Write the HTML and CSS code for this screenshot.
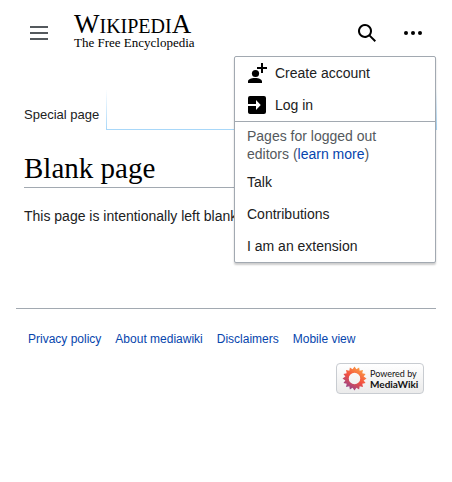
FILE: index.html
```html
<!DOCTYPE html>
<html lang="en">
<head>
<meta charset="utf-8">
<meta name="viewport" content="width=device-width, initial-scale=1">
<title>Blank page</title>
<link rel="stylesheet" href="styles.css">
</head>
<body>
<header class="header">
  <button class="icon-button" type="button" aria-label="Main menu">
    <svg class="icon icon-muted" viewBox="0 0 20 20"><path d="M1 3h18v2H1zm0 6h18v2H1zm0 6h18v2H1z"/></svg>
  </button>
  <a class="logo" href="#">
    <span class="wordmark"><span class="cap">W</span>IKIPEDI<span class="cap">A</span></span>
    <span class="tagline">The Free Encyclopedia</span>
  </a>
  <button class="icon-button search" type="button" aria-label="Search">
    <svg class="icon" viewBox="0 0 20 20"><path fill-rule="evenodd" d="M12.2 13.6a7 7 0 1 1 1.4-1.4l5.4 5.4-1.4 1.4zM13 8A5 5 0 1 0 3 8a5 5 0 0 0 10 0z"/></svg>
  </button>
  <button class="icon-button" type="button" aria-label="Personal tools" aria-expanded="true">
    <svg class="icon" viewBox="0 0 20 20"><circle cx="3" cy="10" r="2"/><circle cx="10" cy="10" r="2"/><circle cx="17" cy="10" r="2"/></svg>
  </button>
  <nav class="menu" aria-label="Personal tools">
    <ul class="menu-list">
      <li><a class="menu-item" href="#"><svg class="icon" viewBox="0 0 20 20"><path d="M14 0h2v4h4v2h-4v4h-2V6h-4V4h4zM1 20v-1.500C1 16.500 4 15 8 15s7 1.500 7 3.500V20z"/><circle cx="8.500" cy="10.500" r="3.600"/></svg>Create account</a></li>
      <li><a class="menu-item" href="#"><svg class="icon" viewBox="0 0 20 20"><path d="M1 11v6c0 1.100.9 2 2 2h14a2 2 0 0 0 2-2V3a2 2 0 0 0-2-2H3a2 2 0 0 0-2 2v6h8V5l4.750 5L9 15v-4z"/></svg>Log in</a></li>
    </ul>
    <p class="menu-heading">Pages for logged out editors (<a href="#">learn more</a>)</p>
    <ul class="menu-list">
      <li><a class="menu-item" href="#">Talk</a></li>
      <li><a class="menu-item" href="#">Contributions</a></li>
      <li><a class="menu-item" href="#">I am an extension</a></li>
    </ul>
  </nav>
</header>
<nav class="tabs" aria-label="Namespaces">
  <a class="tab" href="#">Special page</a>
  <span class="tabs-rest"></span>
</nav>
<main class="content">
  <h1>Blank page</h1>
  <p>This page is intentionally left blank.</p>
</main>
<footer class="footer">
  <ul class="footer-links">
    <li><a href="#">Privacy policy</a></li>
    <li><a href="#">About mediawiki</a></li>
    <li><a href="#">Disclaimers</a></li>
    <li><a href="#">Mobile view</a></li>
  </ul>
  <a class="badge" href="#">
    <svg class="flower" viewBox="-13 -13 26 26" aria-hidden="true">
      <defs>
        <linearGradient id="petals" gradientUnits="userSpaceOnUse" x1="7" y1="-11" x2="-7" y2="11">
          <stop offset="0" stop-color="#fba245"/><stop offset=".5" stop-color="#f4503f"/><stop offset="1" stop-color="#8f4190"/>
        </linearGradient>
      </defs>
      <path fill="url(#petals)" fill-rule="evenodd" d="M0-12.500 2-9.500 4.800-11.500 5.400-8.100 8.800-8.800 8.100-5.400 11.500-4.800 9.500-2 12.500 0 9.500 2 11.500 4.800 8.100 5.400 8.800 8.800 5.400 8.100 4.800 11.500 2 9.500 0 12.500-2 9.500-4.800 11.500-5.400 8.100-8.800 8.800-8.100 5.400-11.500 4.800-9.500 2-12.500 0-9.500-2-11.500-4.800-8.100-5.400-8.800-8.800-5.400-8.100-4.800-11.500-2-9.500zM6 0A6 6 0 1 0-6 0 6 6 0 1 0 6 0z"/>
    </svg>
    <span class="badge-text">Powered by<b>MediaWiki</b></span>
  </a>
</footer>
</body>
</html>
```

FILE: styles.css
```css
* {
  box-sizing: border-box;
}

body {
  margin: 0;
  background: #fff;
  color: #202122;
  font: 14px/22px "Liberation Sans", Arial, sans-serif;
}

a {
  color: #0645ad;
  text-decoration: none;
}

ul {
  margin: 0;
  padding: 0;
  list-style: none;
}

.header {
  position: relative;
  display: flex;
  align-items: center;
  height: 66px;
  padding: 0 16px;
}

.icon-button {
  display: flex;
  align-items: center;
  justify-content: center;
  width: 46px;
  height: 46px;
  padding: 0;
  border: 0;
  background: none;
}

.icon {
  flex: none;
  width: 20px;
  height: 20px;
  fill: #000;
}

.icon-muted {
  fill: #54595d;
}

.search {
  margin-left: auto;
}

.logo {
  display: flex;
  flex-direction: column;
  margin-left: 12px;
  padding-bottom: 4px;
  color: #000;
  font-family: "Liberation Serif", "Times New Roman", serif;
}

.wordmark {
  font-size: 20px;
  line-height: 22px;
}

.cap {
  font-size: 27px;
}

.tagline {
  font-size: 13px;
  line-height: 12px;
}

.menu {
  position: absolute;
  z-index: 1;
  top: 56px;
  right: 16px;
  width: 202px;
  border: 1px solid #a2a9b1;
  border-radius: 2px;
  background: #fff;
  box-shadow: 0 2px 2px rgba(0, 0, 0, 0.2);
}

.menu-item {
  display: flex;
  align-items: center;
  gap: 8px;
  height: 32px;
  padding: 0 12px;
  color: #202122;
}

.menu-heading {
  margin: 0;
  padding: 5px 24px 3px 12px;
  border-top: 1px solid #a2a9b1;
  color: #54595d;
  line-height: 18px;
}

.tabs {
  display: flex;
  margin: 24px 15px 0 16px;
  height: 40px;
}

.tab {
  padding: 14px 7px 0 8px;
  color: #202122;
  font-size: 13px;
}

.tabs-rest {
  flex: 1;
  border: solid #a7d7f9;
  border-width: 0 1px 1px;
  border-image: linear-gradient(#fff, #a7d7f9) 1;
}

.content {
  padding: 20px 24px 0;
}

h1 {
  margin: 0;
  padding-bottom: 1px;
  border-bottom: 1px solid #a2a9b1;
  color: #000;
  font: 29px/36px "Liberation Serif", "Times New Roman", serif;
}

.content p {
  margin: 17px 0 0;
}

.footer {
  display: flex;
  flex-direction: column;
  margin: 81px 16px 0;
  padding: 20px 12px;
  border-top: 1px solid #a2a9b1;
}

.footer-links {
  display: flex;
  flex-wrap: wrap;
  gap: 14px;
  font-size: 12px;
  line-height: 20px;
}

.badge {
  display: flex;
  align-items: center;
  align-self: flex-end;
  gap: 3px;
  width: 88px;
  height: 31px;
  margin-top: 14px;
  padding-left: 5px;
  border: 1px solid #c8ccd1;
  border-radius: 4px;
  background: linear-gradient(#fff, #ebebeb);
  color: #111;
}

.flower {
  flex: none;
  width: 25px;
  height: 25px;
}

.badge-text {
  font: 9px/10px Lato, sans-serif;
  white-space: nowrap;
}

.badge-text b {
  display: block;
  font-size: 10px;
}
```
